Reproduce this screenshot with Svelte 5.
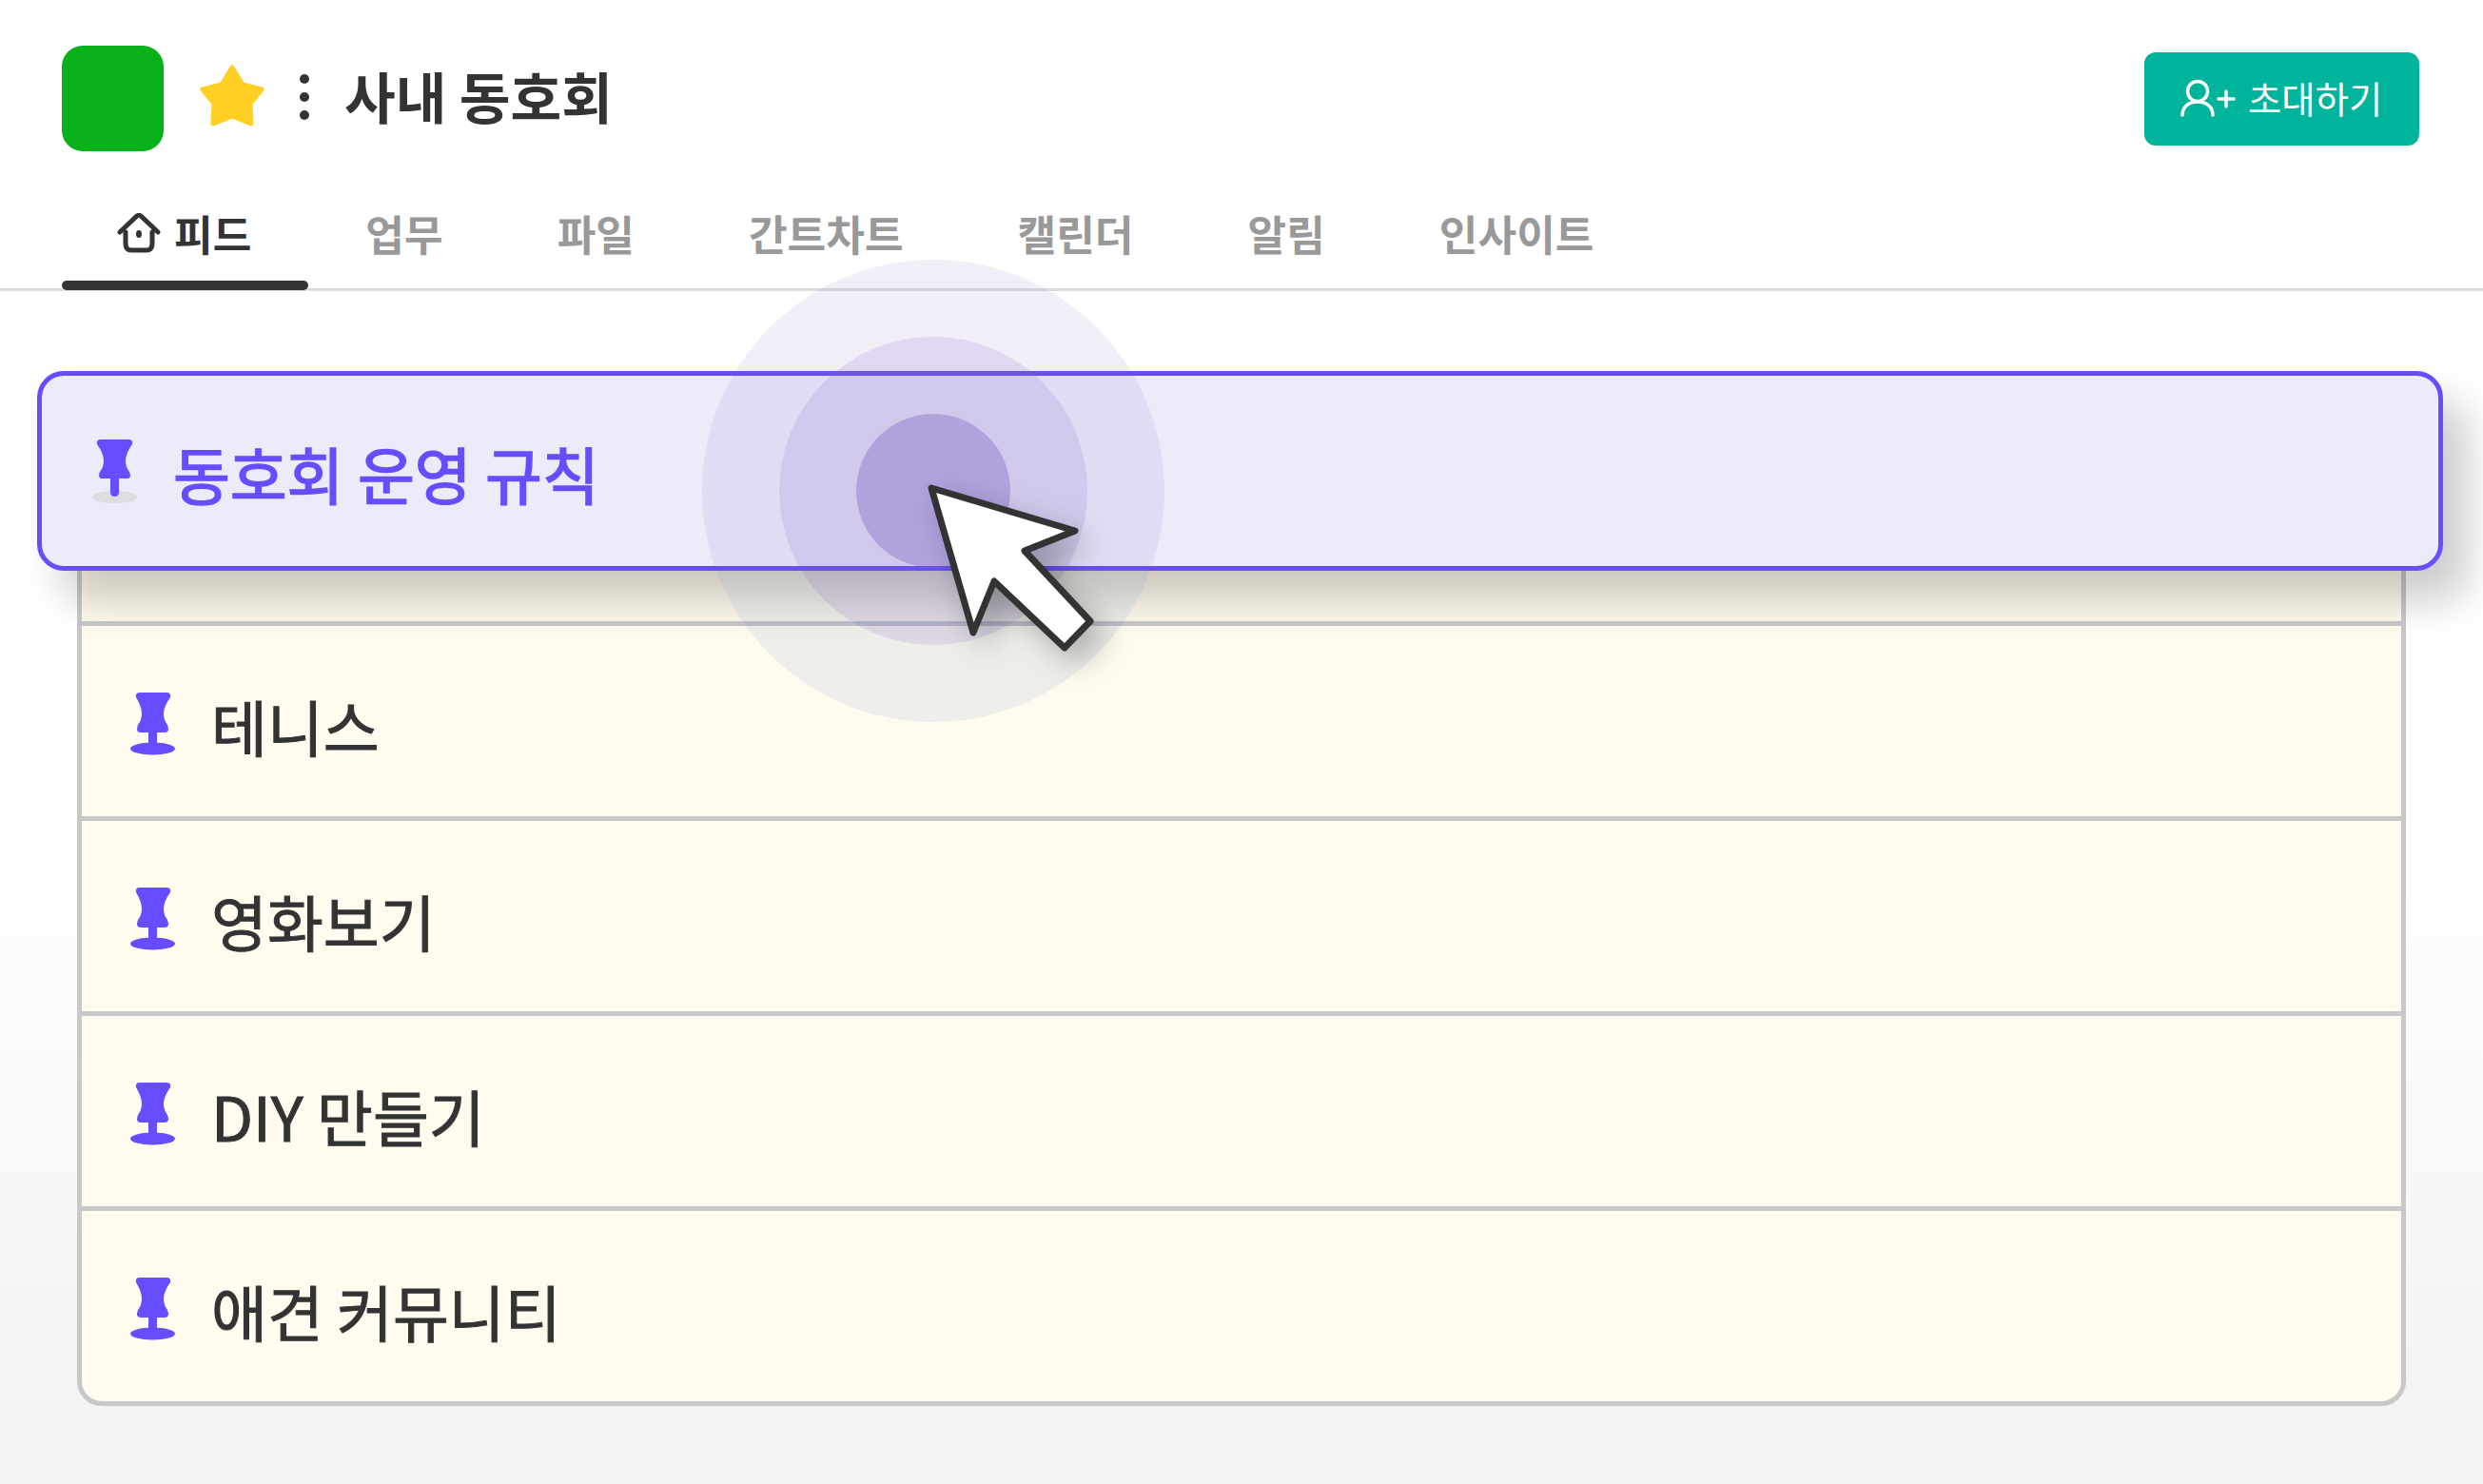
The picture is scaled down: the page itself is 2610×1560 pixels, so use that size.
<script>
  const tabs = ['업무', '파일', '간트차트', '캘린더', '알림', '인사이트'];
  const rows = ['', '테니스', '영화보기', 'DIY 만들기', '애견 커뮤니티'];
</script>

<div class="page">
  <header class="top">
    <div class="logo"></div>
    <svg class="star" viewBox="0 0 68 66" aria-hidden="true">
      <polygon points="34,3 45,21 65,26 53,41 54,62 34,54 14,62 15,41 3,26 23,21" />
    </svg>
    <div class="dots"><i></i><i></i><i></i></div>
    <h1>사내 동호회</h1>
    <button class="invite">
      <svg viewBox="0 0 60 42" class="invite-icon" aria-hidden="true">
        <circle cx="19" cy="13" r="10.5" />
        <path d="M3 38 C3 29 10 24 19 24 C28 24 35 29 35 38" />
        <path d="M41 21 H57 M49 13 V29" />
      </svg>
      <span>초대하기</span>
    </button>
  </header>

  <nav class="tabs">
    <a class="tab active">
      <svg viewBox="0 0 46 42" class="home" aria-hidden="true">
        <path d="M3 20 L21 3 Q23 1.5 25 3 L43 20" />
        <path d="M9 20 V32 Q9 39 15 39 H31 Q37 39 37 32 V20" />
        <ellipse cx="23" cy="22" rx="3" ry="4" />
      </svg>
      피드
    </a>
    {#each tabs as t}
      <a class="tab">{t}</a>
    {/each}
  </nav>

  <main>
    <div class="pinned">
      <svg class="pin" viewBox="0 0 47 67" aria-hidden="true">
        <ellipse class="pin-shadow" cx="23.5" cy="60.5" rx="23.5" ry="6.5" />
        <path d="M9 0 H38 Q43 0 42 5 Q35 15 35 22 Q35 29 39 34 Q42 41 36 41 H28 V55 Q28 60 23.5 60 Q19 60 19 55 V41 H11 Q5 41 8 34 Q12 29 12 22 Q12 15 5 5 Q4 0 9 0Z" />
      </svg>
      <span>동호회 운영 규칙</span>
    </div>

    <div class="card">
      {#each rows as r}
        <div class="row">
          {#if r}
            <svg class="pin" viewBox="0 0 47 66" aria-hidden="true">
              <path d="M10 0 H38 Q43 0 42 5 Q35 15 35 22 Q35 29 39 34 Q42 42 36 42 H28 V53 H19 V42 H11 Q5 42 8 34 Q12 29 12 22 Q12 15 6 5 Q5 0 10 0Z" />
              <ellipse cx="23.5" cy="59" rx="23.5" ry="6.5" />
            </svg>
            <span>{r}</span>
          {/if}
        </div>
      {/each}
    </div>
  </main>

  <div class="ripple" aria-hidden="true">
    <div class="ring r1"></div>
    <div class="ring r2"></div>
    <div class="ring r3"></div>
  </div>

  <svg class="cursor" viewBox="960 495 210 210" aria-hidden="true">
    <path d="M979 513 L1130 558 L1077 579 L1146 653 L1119 681 L1045 611 L1023 665 Z" />
  </svg>
</div>

<style>
  :global(body) {
    margin: 0;
    background: #fff;
  }

  .page {
    position: relative;
    width: 2610px;
    height: 1560px;
    overflow: hidden;
    font-family: "Noto Sans CJK KR", "Noto Sans", sans-serif;
    color: #333;
    background: linear-gradient(180deg, #fff 55%, #f2f2f3 100%);
  }

  .top {
    display: flex;
    align-items: center;
    padding: 48px 67px 0 65px;
  }

  .logo {
    width: 107px;
    height: 111px;
    border-radius: 22px;
    background: #08b01a;
  }

  .star {
    width: 68px;
    height: 66px;
    margin: -6px 0 0 38px;
  }
  .star polygon {
    fill: #ffcf24;
    stroke: #ffcf24;
    stroke-width: 5;
    stroke-linejoin: round;
  }

  .dots {
    display: flex;
    flex-direction: column;
    gap: 9px;
    margin: -4px 0 0 37px;
  }
  .dots i {
    display: block;
    width: 10px;
    height: 10px;
    border-radius: 50%;
    background: #333;
  }

  h1 {
    margin: -6px 0 0 37px;
    font-size: 58.4px;
    font-weight: 700;
    line-height: 1;
  }

  .invite {
    display: flex;
    align-items: center;
    gap: 12px;
    height: 98px;
    width: 289px;
    margin-left: auto;
    padding: 0 0 0 37px;
    border: 0;
    border-radius: 12px;
    background: #00b39b;
    color: #fff;
    font: 400 38.4px "Noto Sans CJK KR", sans-serif;
  }
  .invite span {
    margin-top: -3px;
  }
  .invite-icon {
    width: 60px;
    height: 42px;
    fill: none;
    stroke: #fff;
    stroke-width: 3.5;
    stroke-linecap: round;
  }

  .tabs {
    display: flex;
    height: 116px;
    margin-top: 28px;
    border-bottom: 3px solid #ddd;
  }
  .tab {
    position: relative;
    display: flex;
    align-items: center;
    gap: 14px;
    padding: 0 60px;
    font-size: 44.2px;
    font-weight: 700;
    color: #999;
  }
  .tab.active {
    margin-left: 65px;
    color: #333;
  }
  .tab.active::after {
    content: "";
    position: absolute;
    left: 0;
    right: 0;
    bottom: -2px;
    height: 10px;
    border-radius: 5px;
    background: #333;
  }
  .home {
    width: 46px;
    height: 42px;
    margin-left: -2px;
    fill: none;
    stroke: #333;
    stroke-width: 5;
    stroke-linecap: round;
  }
  .home ellipse {
    fill: #333;
    stroke: none;
  }

  main {
    padding-top: 84px;
  }

  .pinned {
    position: relative;
    z-index: 1;
    display: flex;
    align-items: center;
    gap: 38px;
    box-sizing: border-box;
    height: 210px;
    margin: 0 42px 0 39px;
    padding-left: 53px;
    border: 5px solid #664dff;
    border-radius: 28px;
    background: #ecebf9;
    color: #664dff;
    font-size: 65px;
    font-weight: 400;
    -webkit-text-stroke: 1.6px #664dff;
    box-shadow: 26px 32px 44px rgba(0, 0, 0, 0.2);
  }
  .pinned span {
    margin-top: 4px;
  }
  .pinned .pin {
    width: 47px;
    height: 67px;
  }
  .pin path,
  .pin ellipse {
    fill: #664dff;
  }
  .pin .pin-shadow {
    fill: #dddcdf;
  }

  .card {
    margin: -152px 81px 0;
    border: 5px solid #c8c8c8;
    border-radius: 26px;
    background: #fffbef;
    overflow: hidden;
  }
  .row {
    display: flex;
    align-items: center;
    gap: 38px;
    height: 200px;
    padding-left: 51px;
    font-size: 64px;
    font-weight: 400;
    -webkit-text-stroke: 1px #333;
  }
  .row span {
    margin-top: 8px;
  }
  .row + .row {
    border-top: 5px solid #c8c8c8;
  }
  .row .pin {
    width: 47px;
    height: 66px;
    margin-top: 6px;
  }

  .ripple {
    position: absolute;
    left: 738px;
    top: 273px;
    display: grid;
    place-items: center;
    width: 486px;
    height: 486px;
    z-index: 2;
  }
  .ring {
    grid-area: 1 / 1;
    border-radius: 50%;
  }
  .r1 {
    width: 486px;
    height: 486px;
    background: linear-gradient(180deg, rgba(125, 95, 195, 0.1) 67%, rgba(95, 130, 190, 0.1) 67%);
  }
  .r2 {
    width: 324px;
    height: 324px;
    background: rgba(125, 95, 195, 0.15);
  }
  .r3 {
    width: 162px;
    height: 162px;
    background: rgba(125, 95, 195, 0.37);
  }

  .cursor {
    position: absolute;
    left: 960px;
    top: 495px;
    width: 210px;
    height: 210px;
    z-index: 3;
    overflow: visible;
    filter: drop-shadow(12px 14px 16px rgba(0, 0, 0, 0.28));
  }
  .cursor path {
    fill: #fff;
    stroke: #333;
    stroke-width: 7;
    stroke-linejoin: round;
  }
</style>
